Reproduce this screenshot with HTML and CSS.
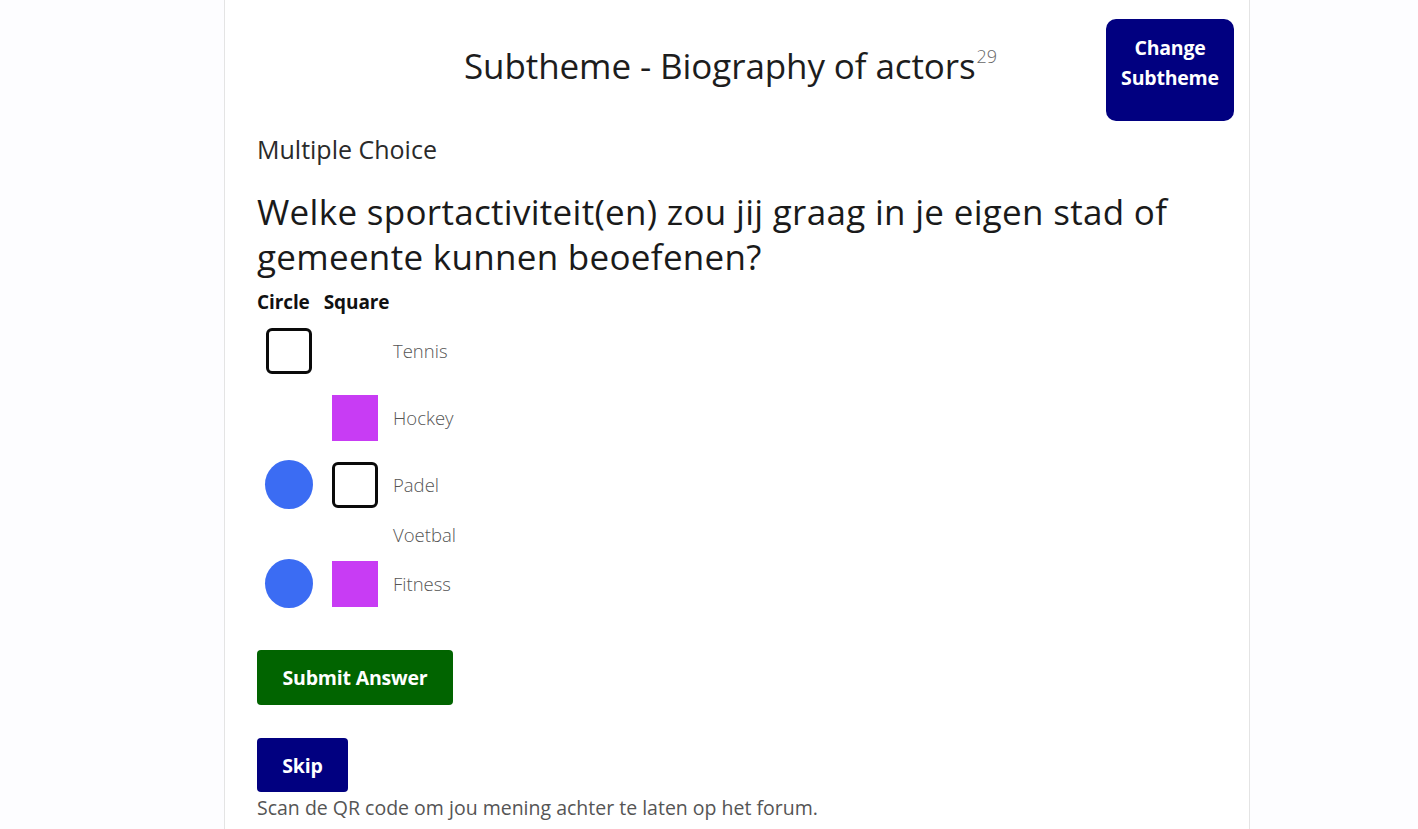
FILE: index.html
```html
<!DOCTYPE html>
<html lang="nl">
<head>
<meta charset="utf-8">
<title>Subtheme</title>
<link rel="stylesheet" href="styles.css">
</head>
<body>
<main class="card">
  <header class="header">
    <div class="spacer"></div>
    <h1 class="title">Subtheme - Biography of actors<sup class="count">29</sup></h1>
    <div class="header-right">
      <button class="btn btn-navy btn-change">Change<br>Subtheme</button>
    </div>
  </header>
  <p class="type">Multiple Choice</p>
  <h2 class="question">Welke sportactiviteit(en) zou jij graag in je eigen stad of gemeente kunnen beoefenen?</h2>
  <div class="legend"><span class="col-head">Circle</span><span class="col-head">Square</span></div>
  <ul class="options">
    <li class="option">
      <span class="cell"><span class="shape box"></span></span>
      <span class="cell"></span>
      <span class="label">Tennis</span>
    </li>
    <li class="option">
      <span class="cell"></span>
      <span class="cell"><span class="shape fill-square"></span></span>
      <span class="label">Hockey</span>
    </li>
    <li class="option">
      <span class="cell"><span class="shape circle"></span></span>
      <span class="cell"><span class="shape box"></span></span>
      <span class="label">Padel</span>
    </li>
    <li class="option option-empty">
      <span class="cell"></span>
      <span class="cell"></span>
      <span class="label">Voetbal</span>
    </li>
    <li class="option">
      <span class="cell"><span class="shape circle"></span></span>
      <span class="cell"><span class="shape fill-square"></span></span>
      <span class="label">Fitness</span>
    </li>
  </ul>
  <div class="actions">
    <button class="btn btn-green btn-submit">Submit Answer</button>
    <button class="btn btn-navy btn-skip">Skip</button>
  </div>
  <p class="note">Scan de QR code om jou mening achter te laten op het forum.</p>
</main>
</body>
</html>
```
FILE: styles.css
```css
html, body {
  margin: 0;
  padding: 0;
  background: #fdfdff;
}
body {
  font-family: "Open Sans", "Noto Sans", sans-serif;
  color: #222;
  height: 829px;
  overflow: hidden;
}
.card {
  width: 1026px;
  margin-left: 224px;
  height: 829px;
  background: #fff;
  border-left: 1px solid #e4e4e4;
  border-right: 1px solid #e4e4e4;
  padding: 19px 15px 0 32px;
  box-sizing: border-box;
  overflow: hidden;
}
.header {
  display: grid;
  grid-template-columns: 1fr auto 1fr;
  align-items: start;
}
.title {
  margin: 24px 30px 0 0;
  font-size: 35px;
  font-weight: 400;
  line-height: 46px;
  letter-spacing: -0.1px;
  color: #1d1d1d;
  white-space: nowrap;
}
.count {
  font-size: 18px;
  font-weight: 300;
  color: #666;
  vertical-align: 0;
  position: relative;
  top: -16px;
  margin-left: 1px;
}
.header-right {
  display: flex;
  justify-content: flex-end;
}
.btn {
  border: none;
  color: #fff;
  font-family: "Open Sans", "Noto Sans", sans-serif;
  font-weight: 700;
  font-size: 19.5px;
  letter-spacing: -0.2px;
  cursor: pointer;
  padding: 0;
}
.btn-navy { background: #010080; }
.btn-green { background: #016400; }
.btn-change {
  width: 128px;
  height: 102px;
  border-radius: 10px;
  line-height: 30px;
  padding-bottom: 14px;
}
.type {
  margin: 12px 0 0 0;
  font-size: 25px;
  line-height: 32px;
  color: #2a2a2a;
}
.question {
  margin: 24px 0 0 0;
  font-size: 35px;
  font-weight: 400;
  line-height: 45px;
  letter-spacing: 0.3px;
  color: #1a1a1a;
  max-width: 960px;
}
.legend {
  display: flex;
  gap: 14px;
  margin-top: 10px;
}
.col-head {
  font-weight: 700;
  font-size: 19px;
  line-height: 26px;
  letter-spacing: -0.1px;
  color: #111;
}
.options {
  list-style: none;
  margin: 12px 0 0 0;
  padding: 0;
  display: flex;
  flex-direction: column;
  gap: 20px;
}
.option {
  display: flex;
  align-items: center;
  gap: 18px;
  padding-left: 8px;
  height: 47px;
}
.option-empty { height: 12px; }
.cell {
  width: 48px;
  display: flex;
  justify-content: center;
}
.cell:nth-child(2) { width: 47px; }
.shape { display: block; }
.box {
  width: 40px;
  height: 40px;
  border: 3.5px solid #0a0a0a;
  border-radius: 6px;
  background: #fff;
}
.circle {
  width: 49px;
  height: 49px;
  border-radius: 50%;
  background: #3b6cf3;
}
.fill-square {
  width: 46px;
  height: 46px;
  background: #c83cf4;
}
.label {
  font-size: 18.5px;
  font-weight: 300;
  color: #555;
  margin-left: -3px;
}
.actions {
  display: flex;
  flex-direction: column;
  align-items: flex-start;
  gap: 33px;
  margin-top: 43px;
}
.btn-submit {
  width: 196px;
  height: 55px;
  border-radius: 4px;
}
.btn-skip {
  width: 91px;
  height: 54px;
  border-radius: 4px;
}
.note {
  margin: 4px 0 0 0;
  font-size: 19.5px;
  line-height: 24px;
  color: #555;
}
```
